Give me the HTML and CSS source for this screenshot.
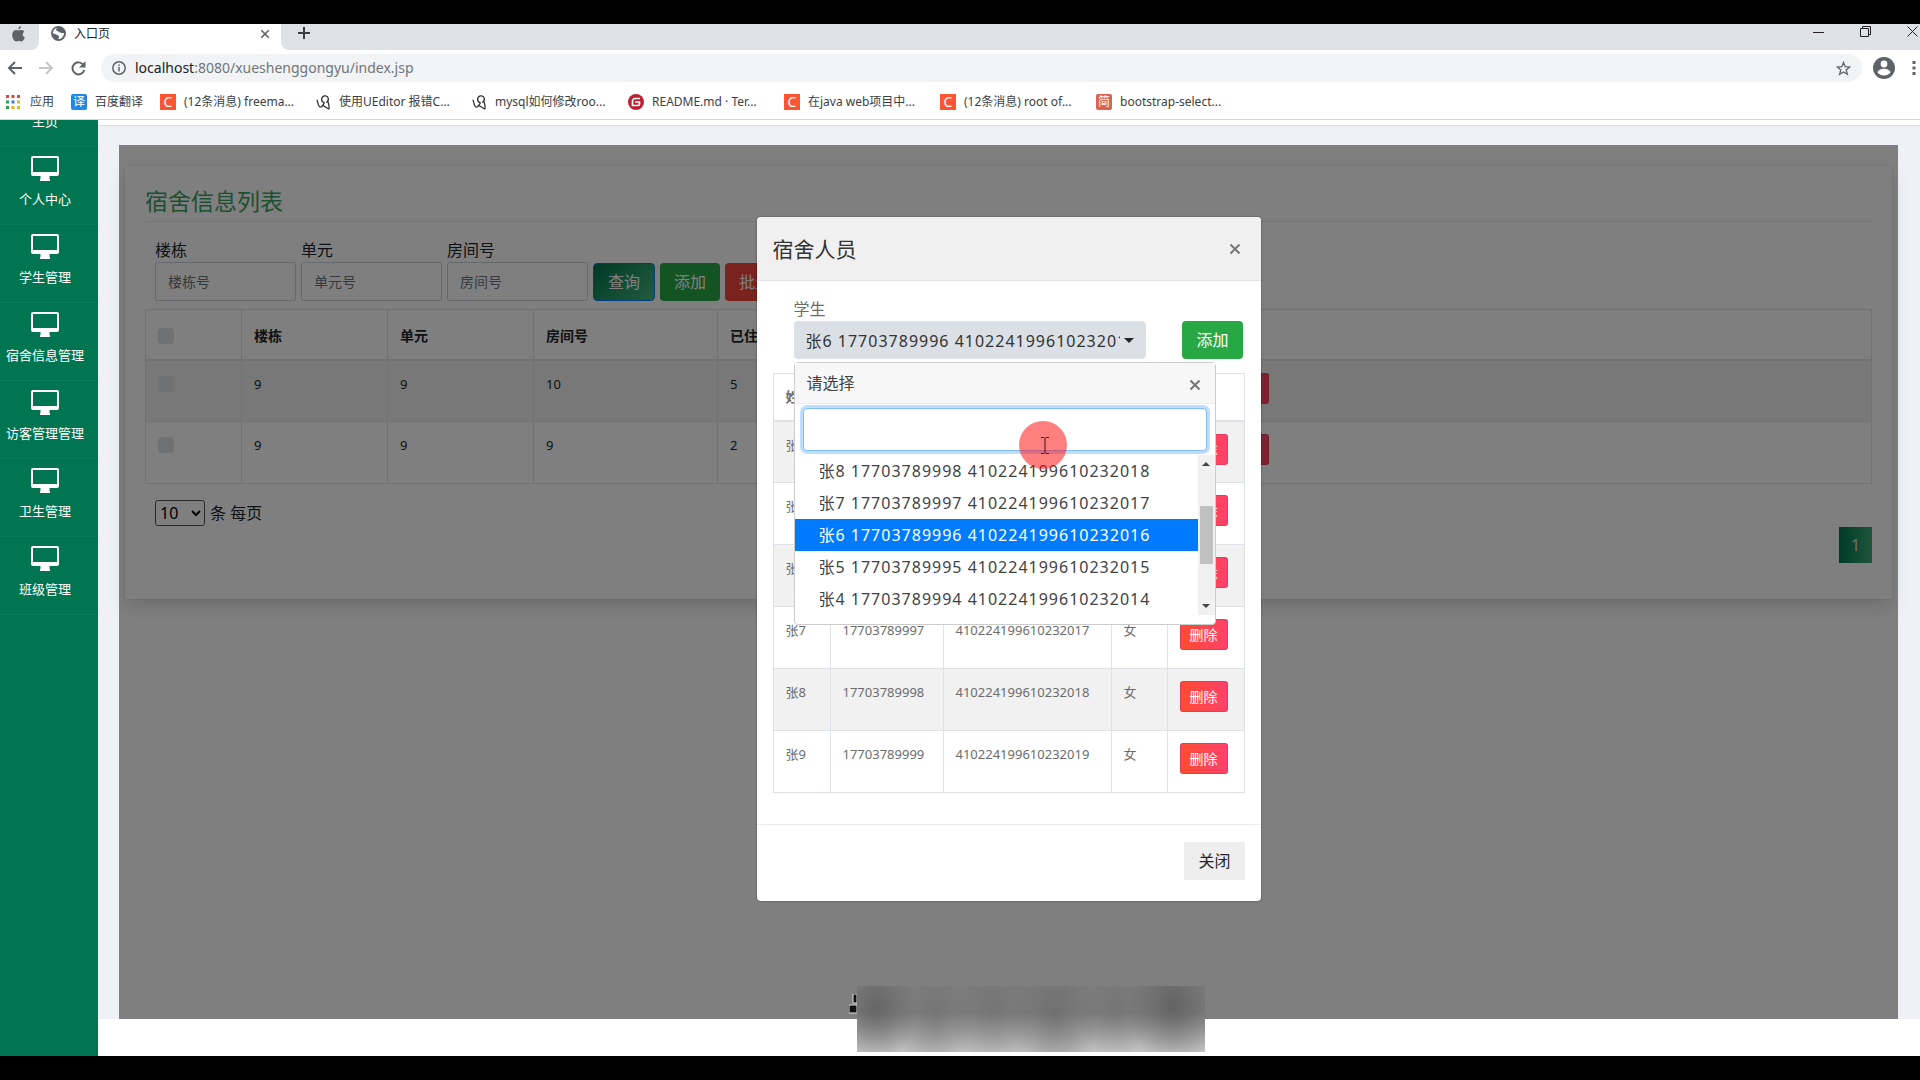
FILE: index.html
```
<!DOCTYPE html>
<html lang="zh-CN">
<head>
    <meta charset="UTF-8">
    <meta name="viewport" content="width=device-width, initial-scale=1.0">
    <title>入口页</title>
    <link rel="stylesheet" href="styles.css">
</head>
<body>
<svg class="sprite" aria-hidden="true">
    <symbol id="icon-close" viewBox="0 0 12 12"><path d="M1.5 1.5l9 9M10.5 1.5l-9 9" fill="none" stroke="currentColor" stroke-width="2"/></symbol>
    <symbol id="icon-desktop" viewBox="0 0 28 25"><path d="M2 0h24a2 2 0 0 1 2 2v16a2 2 0 0 1-2 2h-7.500v3H19v2H9v-2h.5v-3H2a2 2 0 0 1-2-2V2a2 2 0 0 1 2-2zm0 2v14h24V2z" fill="currentColor" fill-rule="evenodd"/></symbol>
    <symbol id="icon-ink" viewBox="0 0 16 18"><path d="M1 6c1 2 1 8 4 8 2 0 3-3 4-5M9 9C5 9 5 3 9 2s6 5 2 7M11 9c2-3 3 2 3 7M6 12c3 0 5 3 8 4" fill="none" stroke="#333" stroke-width="1.4"/></symbol>
</svg>

<header class="browser">
    <div class="tabs">
        <div class="tab tab-pinned">
            <svg width="13" height="16" viewBox="0 0 13 16"><path d="M9 0c0 2-1.200 3.300-2.800 3.400C6.100 1.800 7.400.3 9 0zM6.500 4.600C7.300 4.600 8 4 9.200 4c1.300 0 2.500.7 3.100 1.700-2.300 1.500-1.900 4.600.6 5.600C12.200 13.200 11 15.500 9.600 15.500c-1 0-1.500-.6-2.800-.6s-1.800.6-2.700.6C2 15.400.2 11.800.2 9c0-3 1.900-4.900 3.900-4.900 1 0 1.700.5 2.400.5z" fill="#5f6368"/></svg>
        </div>
        <div class="tab tab-active">
            <svg width="15" height="15" viewBox="0 0 16 16"><circle cx="8" cy="8" r="8" fill="#5f6368"/><path d="M7 2c-2 1-2 2-1 3 2 0 2 2 4 2 1 1 3 0 4 1-1 4-3 6-6 6 0-2 1-2 0-4-2 0-3-2-6-2 0-3 2-6 5-6z" fill="#fff"/></svg>
            <span class="tab-title">入口页</span>
            <button class="icon-button" aria-label="关闭标签页"><svg width="10" height="10"><use href="#icon-close"/></svg></button>
        </div>
        <div class="tab-rest">
            <button class="icon-button" aria-label="新标签页"><svg width="12" height="12" viewBox="0 0 12 12"><path d="M6 0v12M0 6h12" stroke="#3c4043" stroke-width="2"/></svg></button>
            <div class="window-buttons">
                <button class="icon-button" aria-label="最小化"><svg width="11" height="11" viewBox="0 0 11 11"><path d="M0 6.500h11" stroke="#222"/></svg></button>
                <button class="icon-button" aria-label="还原"><svg width="11" height="11" viewBox="0 0 11 11"><path d="M.5 2.500h8v8h-8zM2.500 2.500v-2h8v8h-2" fill="none" stroke="#222"/></svg></button>
                <button class="icon-button" aria-label="关闭"><svg width="11" height="11" viewBox="0 0 11 11"><path d="M.5.5l10 10M10.500.5l-10 10" stroke="#222"/></svg></button>
            </div>
        </div>
    </div>

    <div class="toolbar">
        <button class="icon-button" aria-label="后退"><svg width="15" height="14" viewBox="0 0 15 14"><path d="M15 7H2M8 1L2 7l6 6" fill="none" stroke="#5f6368" stroke-width="2"/></svg></button>
        <button class="icon-button" aria-label="前进"><svg width="15" height="14" viewBox="0 0 15 14"><path d="M0 7h13M7 1l6 6-6 6" fill="none" stroke="#c4c6c9" stroke-width="2"/></svg></button>
        <button class="icon-button" aria-label="刷新"><svg width="15" height="15" viewBox="0 0 15 15"><path d="M12.500 4A6 6 0 1 0 13.300 9" fill="none" stroke="#5f6368" stroke-width="2"/><path d="M14.500 0v6.500H8z" fill="#5f6368"/></svg></button>
        <div class="omnibox">
            <svg width="14" height="14" viewBox="0 0 14 14"><circle cx="7" cy="7" r="6.200" fill="none" stroke="#5f6368" stroke-width="1.500"/><path d="M7 6v4.500M7 3.400v1.500" stroke="#5f6368" stroke-width="1.500"/></svg>
            <span class="url"><b>localhost</b>:8080/xueshenggongyu/index.jsp</span>
            <svg width="15" height="15" viewBox="0 0 15 15"><path d="M7.500 1.500l1.700 4.200 4.500.3-3.500 2.900 1.200 4.400-3.900-2.400-3.900 2.400 1.200-4.400L1.300 6l4.500-.3z" fill="none" stroke="#5f6368" stroke-width="1.300"/></svg>
        </div>
        <svg width="22" height="22" viewBox="0 0 22 22"><circle cx="11" cy="11" r="11" fill="#5f6368"/><circle cx="11" cy="7" r="3.400" fill="#fff"/><path d="M4.500 15.500c1-5 12-5 13 0-3 4-10 4-13 0z" fill="#fff"/></svg>
        <svg width="4" height="14" viewBox="0 0 4 14"><path d="M.5 0h3v3h-3zM.5 5.500h3v3h-3zM.5 11h3v3h-3z" fill="#5f6368"/></svg>
    </div>

    <nav class="bookmarks">
        <a class="bookmark bookmark-short" href="#">
            <svg width="14" height="14" viewBox="0 0 14 14"><path d="M0 0h3v3H0zM5.500 0h3v3h-3zM11 0h3v3h-3z" fill="#d9473a"/><path d="M0 5.500h3v3H0z" fill="#2f9e52"/><path d="M5.500 5.500h3v3h-3z" fill="#3b78e7"/><path d="M11 5.500h3v3h-3zM11 11h3v3h-3zM5.500 11h3v3h-3z" fill="#e8b321"/><path d="M0 11h3v3H0z" fill="#2f9e52"/></svg>
            <span>应用</span>
        </a>
        <a class="bookmark bookmark-mid" href="#"><i class="fav fav-blue">译</i><span>百度翻译</span></a>
        <a class="bookmark" href="#"><i class="fav fav-c">C</i><span>(12条消息) freema...</span></a>
        <a class="bookmark" href="#"><svg width="15" height="17"><use href="#icon-ink"/></svg><span>使用UEditor 报错C...</span></a>
        <a class="bookmark" href="#"><svg width="15" height="17"><use href="#icon-ink"/></svg><span>mysql如何修改roo...</span></a>
        <a class="bookmark" href="#">
            <svg width="16" height="16" viewBox="0 0 16 16"><circle cx="8" cy="8" r="8" fill="#bd1e30"/><path d="M12 4.500H7A2.500 2.500 0 0 0 4.500 7v4.500H10A1.500 1.500 0 0 0 11.500 10V8H7" fill="none" stroke="#fff" stroke-width="1.700"/></svg>
            <span>README.md · Ter...</span>
        </a>
        <a class="bookmark" href="#"><i class="fav fav-c">C</i><span>在java web项目中...</span></a>
        <a class="bookmark" href="#"><i class="fav fav-c">C</i><span>(12条消息) root of...</span></a>
        <a class="bookmark" href="#"><i class="fav fav-jian">简</i><span>bootstrap-select...</span></a>
    </nav>
</header>

<div class="page">
    <aside class="sidebar">
        <ul class="menu">
            <li><a href="#"><svg width="28" height="25"><use href="#icon-desktop"/></svg>主页</a></li>
            <li><a href="#"><svg width="28" height="25"><use href="#icon-desktop"/></svg>个人中心</a></li>
            <li><a href="#"><svg width="28" height="25"><use href="#icon-desktop"/></svg>学生管理</a></li>
            <li><a href="#"><svg width="28" height="25"><use href="#icon-desktop"/></svg>宿舍信息管理</a></li>
            <li><a href="#"><svg width="28" height="25"><use href="#icon-desktop"/></svg>访客管理管理</a></li>
            <li><a href="#"><svg width="28" height="25"><use href="#icon-desktop"/></svg>卫生管理</a></li>
            <li><a href="#"><svg width="28" height="25"><use href="#icon-desktop"/></svg>班级管理</a></li>
        </ul>
    </aside>

    <div class="main">
        <div class="topbar"></div>
        <main class="frame">
            <section class="card">
                <h1 class="card-title">宿舍信息列表</h1>
                <form class="search-form">
                    <div class="field"><label for="building">楼栋</label><input type="text" id="building" placeholder="楼栋号"></div>
                    <div class="field"><label for="unit">单元</label><input type="text" id="unit" placeholder="单元号"></div>
                    <div class="field"><label for="room">房间号</label><input type="text" id="room" placeholder="房间号"></div>
                    <button type="button" class="btn btn-query">查询</button>
                    <button type="button" class="btn btn-success">添加</button>
                    <button type="button" class="btn btn-danger">批量删除</button>
                </form>

                <table class="table room-table">
                    <colgroup><col class="col-check"><col class="col-building"><col class="col-unit"><col class="col-room"><col class="col-count"><col></colgroup>
                    <thead>
                        <tr><th><input type="checkbox" aria-label="全选"></th><th>楼栋</th><th>单元</th><th>房间号</th><th>已住人数</th><th></th></tr>
                    </thead>
                    <tbody>
                        <tr><td><input type="checkbox" aria-label="选择"></td><td>9</td><td>9</td><td>10</td><td>5</td><td><button class="btn-delete">删除</button></td></tr>
                        <tr><td><input type="checkbox" aria-label="选择"></td><td>9</td><td>9</td><td>9</td><td>2</td><td><button class="btn-delete">删除</button></td></tr>
                    </tbody>
                </table>

                <div class="table-footer">
                    <div class="page-size">
                        <select id="pageSize"><option>10</option><option>20</option></select>
                        <label for="pageSize">条 每页</label>
                    </div>
                    <a class="page-link" href="#">1</a>
                </div>
            </section>

            <div class="backdrop">
                <div class="modal" role="dialog" aria-labelledby="modalTitle">
                    <div class="modal-header">
                        <h2 id="modalTitle">宿舍人员</h2>
                        <button class="icon-button close" aria-label="关闭"><svg width="12" height="12"><use href="#icon-close"/></svg></button>
                    </div>
                    <div class="modal-body">
                        <div class="student-row">
                            <div class="student-picker">
                                <label for="student">学生</label>
                                <button id="student" class="picker-button"><span>张6 17703789996 410224199610232016</span></button>
                                <div class="dropdown">
                                    <div class="dropdown-header">
                                        <span>请选择</span>
                                        <button class="icon-button close" aria-label="关闭"><svg width="12" height="12"><use href="#icon-close"/></svg></button>
                                    </div>
                                    <input class="dropdown-search" type="text" aria-label="搜索">
                                    <div class="dropdown-body">
                                        <ul class="options">
                                            <li><a href="#">张8 17703789998 410224199610232018</a></li>
                                            <li><a href="#">张7 17703789997 410224199610232017</a></li>
                                            <li><a class="selected" href="#">张6 17703789996 410224199610232016</a></li>
                                            <li><a href="#">张5 17703789995 410224199610232015</a></li>
                                            <li><a href="#">张4 17703789994 410224199610232014</a></li>
                                        </ul>
                                        <div class="scrollbar">
                                            <svg width="8" height="4" viewBox="0 0 8 4"><path d="M0 4l4-4 4 4z" fill="#444"/></svg>
                                            <div class="thumb"></div>
                                            <svg width="8" height="4" viewBox="0 0 8 4"><path d="M0 0l4 4 4-4z" fill="#444"/></svg>
                                        </div>
                                    </div>
                                    <div class="pointer">
                                        <svg width="8" height="17" viewBox="0 0 8 17"><path d="M0 .5h3l1 1 1-1h3M4 1.500v14M0 16.500h3l1-1 1 1h3" fill="none" stroke="#401010"/></svg>
                                    </div>
                                </div>
                            </div>
                            <button class="btn btn-success">添加</button>
                        </div>

                        <table class="table person-table">
                            <colgroup><col class="col-name"><col class="col-phone"><col class="col-id"><col class="col-sex"><col></colgroup>
                            <thead>
                                <tr><th>姓名</th><th></th><th></th><th></th><th></th></tr>
                            </thead>
                            <tbody>
                                <tr><td>张4</td><td></td><td></td><td></td><td><button class="btn-delete">删除</button></td></tr>
                                <tr><td>张5</td><td></td><td></td><td></td><td><button class="btn-delete">删除</button></td></tr>
                                <tr><td>张6</td><td></td><td></td><td></td><td><button class="btn-delete">删除</button></td></tr>
                                <tr><td>张7</td><td>17703789997</td><td>410224199610232017</td><td>女</td><td><button class="btn-delete">删除</button></td></tr>
                                <tr><td>张8</td><td>17703789998</td><td>410224199610232018</td><td>女</td><td><button class="btn-delete">删除</button></td></tr>
                                <tr><td>张9</td><td>17703789999</td><td>410224199610232019</td><td>女</td><td><button class="btn-delete">删除</button></td></tr>
                            </tbody>
                        </table>
                    </div>
                    <div class="modal-footer">
                        <button class="btn btn-close">关闭</button>
                    </div>
                </div>
            </div>
        </main>
        <footer class="footer"></footer>
    </div>
</div>

<!-- blurred caption over the bottom edge -->
<div class="caption">
    <svg width="8" height="20" viewBox="0 0 8 20"><path d="M4 0h4v9H4zM0 11h8v8H0z" fill="#111" stroke="#ddd"/></svg>
    <div class="caption-blur"></div>
</div>
</body>
</html>
```
FILE: styles.css
```
:root {
    --green: #00754f;
    --success: #28a745;
    --border: #dee2e6;
    --chrome: #dee1e6;
}

* {
    box-sizing: border-box;
}

body {
    display: flex;
    flex-direction: column;
    height: 100vh;
    margin: 0;
    padding: 24px 0;
    background: #000;
    color: #212529;
    font-family: "Noto Sans", "Noto Sans CJK SC", sans-serif;
    font-size: 16px;
    line-height: 24px;
    overflow: hidden;
    position: relative;
}

button, input, select {
    font-family: inherit;
    font-size: inherit;
    margin: 0;
}

a {
    color: inherit;
    text-decoration: none;
}

ul {
    list-style: none;
    margin: 0;
    padding: 0;
}

svg {
    display: block;
    flex: none;
}

.sprite {
    position: absolute;
    width: 0;
    height: 0;
}

.icon-button {
    border: none;
    background: none;
    padding: 0;
    color: #5f6368;
}

/* browser */
.browser {
    background: #fff;
    border-bottom: 1px solid #d5d7da;
}

.tabs {
    display: flex;
    height: 26px;
}

.tab {
    display: flex;
    align-items: center;
    height: 26px;
    padding-bottom: 7px;
}

.tab-pinned {
    width: 39px;
    padding-left: 12px;
    background: var(--chrome);
    border-radius: 0 0 8px 0;
}

.tab-active {
    width: 242px;
    padding-left: 12px;
    padding-right: 11px;
    gap: 8px;
}

.tab-title {
    flex: 1;
    font-size: 12px;
}

.tab-rest {
    flex: 1;
    display: flex;
    justify-content: space-between;
    padding: 3px 2px 0 17px;
    background: var(--chrome);
    border-radius: 0 0 0 8px;
}

.tab-rest .icon-button {
    height: 12px;
}

.window-buttons {
    display: flex;
    gap: 36px;
    margin-top: -2px;
}

.toolbar {
    display: flex;
    align-items: center;
    gap: 17px;
    padding: 4px 4px 4px 7px;
}

.omnibox {
    flex: 1;
    display: flex;
    align-items: center;
    gap: 9px;
    height: 28px;
    margin-left: -2px;
    margin-right: -6px;
    padding: 0 11px;
    border-radius: 14px;
    background: #f1f3f4;
}

.url {
    flex: 1;
    font-size: 14px;
    color: #70757a;
}

.url b {
    font-weight: normal;
    color: #202124;
}

.bookmarks {
    display: flex;
    height: 33px;
    padding: 0 0 1px 6px;
    font-size: 12px;
    color: #3c4043;
}

.bookmark {
    display: flex;
    align-items: center;
    gap: 8px;
    width: 156px;
    white-space: nowrap;
}

.bookmark-short {
    width: 65px;
    gap: 10px;
}

.bookmark-mid {
    width: 89px;
}

.fav {
    width: 16px;
    height: 16px;
    border-radius: 2px;
    color: #fff;
    font-style: normal;
    font-size: 12px;
    line-height: 16px;
    text-align: center;
}

.fav-blue {
    background: #1f87e8;
}

.fav-c {
    background: #fc5531;
    border-radius: 0;
    font-size: 14px;
}

.fav-jian {
    background: #dd6250;
}

/* page */
.page {
    flex: 1;
    display: flex;
    min-height: 0;
    background: #f0f1f6;
}

.sidebar {
    width: 98px;
    background: var(--green);
    overflow: hidden;
}

/* menu is scrolled by part of its first item */
.menu {
    margin-top: -51px;
}

.menu a {
    display: flex;
    flex-direction: column;
    align-items: center;
    gap: 6px;
    height: 78px;
    padding: 9px 8px 0 0;
    border-bottom: 1px solid #0a7c57;
    color: #fff;
    font-size: 13px;
}

.main {
    flex: 1;
    display: flex;
    flex-direction: column;
    min-width: 0;
}

.topbar {
    height: 6px;
    background: #fff;
    border-bottom: 1px solid #dcdde0;
}

.frame {
    flex: 1;
    position: relative;
    margin: 19px 22px 0 21px;
    padding: 21px 6px 0;
    background: #fff;
    min-height: 0;
}

.footer {
    height: 37px;
    background: #fff;
}

.card {
    padding: 20px 20px 36px;
    background: #fff;
    box-shadow: 0 8px 16px rgba(70, 80, 100, 0.18), 0 0 2px rgba(70, 80, 100, 0.15);
}

.card-title {
    margin: 0 0 16px;
    padding-bottom: 5px;
    border-bottom: 1px solid #e8e8e8;
    color: #3f9e67;
    font-size: 23px;
    font-weight: normal;
    line-height: 30px;
}

.search-form {
    display: flex;
    align-items: flex-end;
    gap: 5px;
    padding: 0 10px;
}

.field {
    display: flex;
    flex-direction: column;
    width: 141px;
}

.field input {
    height: 39px;
    padding: 0 12px;
    border: 1px solid #ced4da;
    border-radius: 2px;
    background: #fff;
    font-size: 14px;
}

.field input::placeholder {
    color: #6c757d;
}

.btn {
    height: 38px;
    padding: 0 14px 2px;
    border: none;
    border-radius: 4px;
    color: #fff;
    white-space: nowrap;
}

.btn-query {
    border: 1px solid #007bff;
    background: linear-gradient(135deg, #00754f, #45b97c);
}

.btn-success {
    background: var(--success);
}

.btn-danger {
    background: #f4453c;
}

.btn-close {
    border-radius: 2px;
    background: #eee;
    color: #212529;
}

.btn-delete {
    display: block;
    width: 48px;
    height: 31px;
    padding: 0 0 2px;
    border: 1px solid rgba(190, 60, 80, 0.5);
    border-radius: 3px;
    background: linear-gradient(90deg, #ff4b2f, #ff416c);
    color: #fff;
    font-size: 14px;
}

.table {
    width: 100%;
    table-layout: fixed;
    border-collapse: collapse;
    font-size: 13px;
}

.table th,
.table td {
    height: 62px;
    padding: 11px 12px;
    border: 1px solid var(--border);
    text-align: left;
    vertical-align: top;
}

.table td:last-child {
    padding-top: 12px;
}

.table th {
    border-bottom: 2px solid var(--border);
    font-size: 14px;
    white-space: nowrap;
}

.table tbody tr:nth-child(odd) {
    background: #f1f1f1;
}

.room-table {
    margin-top: 8px;
}

.room-table th {
    height: 50px;
    padding: 14px 12px 10px;
}

.col-check {
    width: 96px;
}

.col-building, .col-unit {
    width: 146px;
}

.col-room {
    width: 184px;
}

.col-count {
    width: 491px;
}

.table input[type="checkbox"] {
    appearance: none;
    display: block;
    width: 16px;
    height: 16px;
    margin: 4px 0;
    border-radius: 4px;
    background: #dee2e6;
}

.table-footer {
    display: flex;
    justify-content: space-between;
    align-items: flex-start;
    margin-top: 16px;
    padding-left: 10px;
}

.page-size {
    display: flex;
    align-items: center;
    gap: 5px;
}

.page-size select {
    width: 50px;
    height: 26px;
    border: 1px solid #555;
    border-radius: 3px;
    background: #fff;
}

.page-link {
    width: 33px;
    margin-top: 27px;
    background: linear-gradient(90deg, #00754f, #3eab78);
    color: #ddd;
    line-height: 36px;
    text-align: center;
}

/* modal */
.backdrop {
    position: absolute;
    inset: 0;
    padding-top: 72px;
    background: rgba(0, 0, 0, 0.5);
}

.modal {
    width: 504px;
    margin: 0 auto;
    border-radius: 4px;
    background: #fff;
    box-shadow: 0 0 2px rgba(0, 0, 0, 0.5);
    color: #6c6c6c;
}

.modal-header {
    display: flex;
    justify-content: space-between;
    align-items: center;
    height: 64px;
    padding: 0 20px 0 16px;
    border-bottom: 1px solid #e2e4e6;
    border-radius: 4px 4px 0 0;
    background: #f0f0f0;
    color: #333;
}

.modal-header h2 {
    margin: 0;
    font-size: 21px;
    font-weight: normal;
    line-height: 30px;
}

.close {
    color: #777;
}

.modal-body {
    padding: 16px 16px 31px;
}

.student-row {
    display: flex;
    justify-content: space-between;
    align-items: flex-end;
    padding: 0 2px 0 21px;
}

.student-picker {
    position: relative;
    width: 352px;
}

.student-picker label {
    display: block;
}

.picker-button {
    display: flex;
    align-items: center;
    gap: 4px;
    width: 100%;
    height: 38px;
    padding: 0 12px;
    border: none;
    border-radius: 4px;
    background: #dae0e5;
    color: #333;
    letter-spacing: 1px;
    text-align: left;
}

.picker-button span {
    flex: 1;
    overflow: hidden;
    white-space: nowrap;
}

.picker-button::after {
    content: '';
    border: 5px solid transparent;
    border-top-color: #212529;
    border-bottom: none;
}

.dropdown {
    position: absolute;
    top: 65px;
    left: 0;
    z-index: 2;
    width: 422px;
    border: 1px solid #ccc;
    border-radius: 4px;
    padding-bottom: 9px;
    background: #fff;
    color: #404346;
}

.dropdown-header {
    display: flex;
    justify-content: space-between;
    align-items: center;
    height: 41px;
    padding: 0 14px 0 12px;
    border-bottom: 1px solid #ececec;
    background: #f7f7f7;
}

.dropdown-header .close {
    padding-top: 4px;
}

.dropdown-search {
    display: block;
    width: calc(100% - 16px);
    height: 43px;
    margin: 4px 8px;
    border: 1px solid #80bdff;
    border-radius: 4px;
    outline: none;
    box-shadow: 0 0 0 3px #bfdeff;
}

.dropdown-body {
    display: flex;
}

.options {
    flex: 1;
    letter-spacing: 1px;
}

.options a {
    display: block;
    padding: 4px 24px;
    white-space: nowrap;
}

.options .selected {
    background: #007bff;
    color: #fff;
}

.scrollbar {
    display: flex;
    flex-direction: column;
    justify-content: space-between;
    align-items: center;
    width: 17px;
    padding: 7px 0;
    background: #f1f1f1;
}

.thumb {
    width: 13px;
    height: 58px;
    background: #c1c1c1;
}

.pointer {
    position: absolute;
    top: 58px;
    left: 224px;
    display: flex;
    align-items: center;
    justify-content: center;
    width: 48px;
    height: 48px;
    padding-left: 4px;
    border-radius: 50%;
    background: rgba(255, 0, 0, 0.5);
}

.person-table {
    margin-top: 14px;
}

.person-table th {
    height: 47px;
    padding: 11px 12px 10px;
}

.col-name {
    width: 57px;
}

.col-phone {
    width: 113px;
}

.col-id {
    width: 168px;
}

.col-sex {
    width: 56px;
}

.modal-footer {
    display: flex;
    justify-content: flex-end;
    padding: 17px 16px 21px;
    border-top: 1px solid #e9ecef;
}

/* caption */
.caption {
    position: absolute;
    left: 849px;
    bottom: 28px;
    display: flex;
    width: 356px;
    height: 66px;
}

.caption svg {
    margin-top: 8px;
}

.caption-blur {
    flex: 1;
    background:
        radial-gradient(ellipse 40px 56px at 20px 22px, rgba(85, 85, 85, 0.6), transparent),
        radial-gradient(ellipse 38px 64px at 78px 32px, rgba(100, 100, 100, 0.4), transparent),
        radial-gradient(ellipse 44px 64px at 136px 24px, rgba(100, 100, 100, 0.4), transparent),
        radial-gradient(ellipse 44px 74px at 198px 30px, rgba(95, 95, 95, 0.5), transparent),
        radial-gradient(ellipse 38px 50px at 258px 22px, rgba(100, 100, 100, 0.4), transparent),
        radial-gradient(ellipse 46px 60px at 316px 20px, rgba(80, 80, 80, 0.6), transparent),
        linear-gradient(#808080, #808080 40%, #c4c4c4);
}
```
